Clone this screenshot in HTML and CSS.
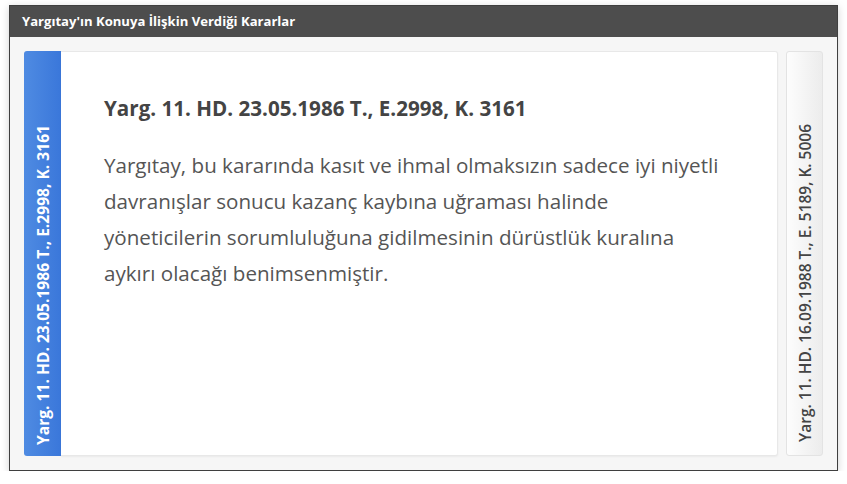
FILE: index.html
```html
<!DOCTYPE html>
<html lang="tr">
<head>
<meta charset="utf-8">
<link rel="stylesheet" href="styles.css">
</head>
<body>
<div class="window">
  <div class="header">Yargıtay'ın Konuya İlişkin Verdiği Kararlar</div>
  <div class="body">
    <div class="tab tab-active"><span class="tab-label">Yarg. 11. HD. 23.05.1986 T., E.2998, K. 3161</span></div>
    <div class="card">
      <h2 class="card-title">Yarg. 11. HD. 23.05.1986 T., E.2998, K. 3161</h2>
      <p class="card-text">Yargıtay, bu kararında kasıt ve ihmal olmaksızın sadece iyi niyetli davranışlar sonucu kazanç kaybına uğraması halinde yöneticilerin sorumluluğuna gidilmesinin dürüstlük kuralına aykırı olacağı benimsenmiştir.</p>
    </div>
    <div class="tab tab-inactive"><span class="tab-label">Yarg. 11. HD. 16.09.1988 T., E. 5189, K. 5006</span></div>
  </div>
</div>
</body>
</html>
```

FILE: styles.css
```css
html, body {
  margin: 0;
  padding: 0;
  background: #ffffff;
}
body {
  padding: 5px 0 0 9px;
  font-family: "Open Sans", "Noto Sans", sans-serif;
}
.window {
  width: 827px;
  height: 464px;
  border: 1px solid #3f3f3f;
  background: #f6f6f6;
  box-shadow: 0 2px 8px rgba(0,0,0,0.18);
  display: flex;
  flex-direction: column;
}
.header {
  height: 31px;
  background: #4d4d4d;
  color: #ffffff;
  font-weight: 700;
  font-size: 13.1px;
  line-height: 31px;
  padding-left: 12px;
}
.body {
  flex: 1;
  display: flex;
  padding: 14px 14px 14px 14px;
}
.tab {
  width: 37px;
  border-radius: 3px;
  display: flex;
  align-items: flex-end;
  justify-content: center;
  box-sizing: border-box;
  padding-bottom: 11px;
}
.tab-label {
  writing-mode: vertical-rl;
  transform: rotate(180deg);
  font-weight: 700;
  font-size: 15.6px;
  white-space: nowrap;
}
.tab-active {
  background: linear-gradient(to right, #4f8be2, #3a77da);
  color: #ffffff;
  border-radius: 3px 0 0 3px;
}
.tab-inactive {
  margin-left: 8px;
  background: linear-gradient(to right, #fdfdfd, #ececec);
  border: 1px solid #e3e3e3;
  color: #444444;
  padding-bottom: 13px;
}
.tab-inactive .tab-label {
  font-weight: 600;
  font-size: 15.5px;
}
.card {
  flex: 1;
  background: #ffffff;
  border: 1px solid #e8e8e8;
  border-left: none;
  border-radius: 0 3px 3px 0;
  padding: 41px 40px 0 43px;
  box-shadow: 0 1px 2px rgba(0,0,0,0.05);
}
.card-title {
  margin: 0 0 24px 0;
  font-size: 20.6px;
  font-weight: 700;
  color: #444444;
  line-height: 30px;
}
.card-text {
  margin: 0;
  max-width: 622px;
  font-size: 20.6px;
  line-height: 36px;
  color: #555555;
}
```
